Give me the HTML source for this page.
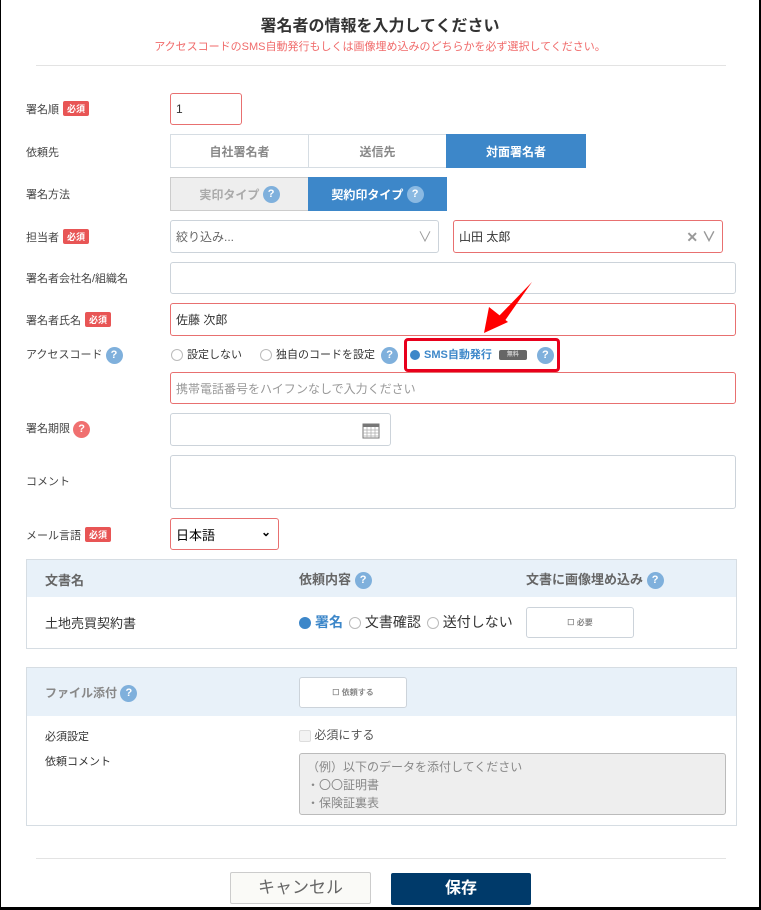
<!DOCTYPE html>
<html><head><meta charset="utf-8"><style>
*{box-sizing:border-box;margin:0;padding:0}
body{width:761px;height:910px;background:#000;font-family:"Liberation Sans","Noto Sans CJK JP",sans-serif;position:relative;overflow:hidden;color:#333}
#p{position:absolute;left:1px;top:0;width:758px;height:907px;background:#fff}
.a{position:absolute}
.lbl{position:absolute;left:25px;font-size:11px;color:#444}
.req{display:inline-block;background:#e85555;color:#fff;font-size:9px;font-weight:bold;padding:1px 4px;border-radius:2px;margin-left:4px;vertical-align:1px}
.in{position:absolute;border:1px solid #ccd3da;border-radius:3px;background:#fff;font-size:12px;padding-left:5px;display:flex;align-items:center}
.red{border-color:#e87070}
.q{display:inline-block;width:17px;height:17px;border-radius:50%;background:#7fb0dc;color:#fff;font-size:11px;font-weight:bold;text-align:center;line-height:17px;vertical-align:middle}
.tb{position:absolute;display:flex;align-items:center;justify-content:center;font-size:12px;font-weight:bold;border:1px solid #d6dde3}
.rd{display:inline-block;width:12px;height:12px;border:1px solid #bbb;border-radius:50%;vertical-align:middle;margin-right:4px}
.rd.on{background:#3d87c9;border-color:#3d87c9}
</style></head><body><div id="p">
<div class="a" style="left:0;width:758px;top:12px;text-align:center;font-size:16px;font-weight:bold;color:#333">署名者の情報を入力してください</div>
<div class="a" style="left:0;width:758px;top:38px;text-align:center;font-size:11px;color:#f06a6a">アクセスコードのSMS自動発行もしくは画像埋め込みのどちらかを必ず選択してください。</div>
<div class="a" style="left:35px;top:65px;width:690px;height:1px;background:#e3e3e3"></div>

<div class="lbl" style="top:101px">署名順<span class="req">必須</span></div>
<div class="in red" style="left:169px;top:93px;width:72px;height:32px">1</div>

<div class="lbl" style="top:144px">依頼先</div>
<div class="tb" style="left:169px;top:134px;width:139px;height:34px;color:#888">自社署名者</div>
<div class="tb" style="left:307px;top:134px;width:139px;height:34px;color:#888">送信先</div>
<div class="tb" style="left:445px;top:134px;width:140px;height:34px;background:#3d87c9;border-color:#3d87c9;color:#fff">対面署名者</div>

<div class="lbl" style="top:186px">署名方法</div>
<div class="tb" style="left:169px;top:177px;width:139px;height:34px;background:#eee;color:#aaa;border-color:#ccc">実印タイプ&nbsp;<span class="q">?</span></div>
<div class="tb" style="left:307px;top:177px;width:139px;height:34px;background:#3d87c9;border-color:#3d87c9;color:#fff">契約印タイプ&nbsp;<span class="q" style="background:#8ab9e2">?</span></div>

<div class="lbl" style="top:229px">担当者<span class="req">必須</span></div>
<div class="in" style="left:169px;top:220px;width:269px;height:33px;color:#666">絞り込み...<span class="a" style="right:6px;top:6px;color:#999;font-size:14px">&#8744;</span></div>
<div class="in red" style="left:452px;top:220px;width:270px;height:33px">山田 太郎<span class="a" style="right:6px;top:6px;color:#999;font-size:14px;font-weight:bold">✕ &#8744;</span></div>

<div class="lbl" style="top:270px">署名者会社名/組織名</div>
<div class="in" style="left:169px;top:262px;width:566px;height:32px"></div>

<div class="lbl" style="top:312px">署名者氏名<span class="req">必須</span></div>
<div class="in red" style="left:169px;top:303px;width:566px;height:33px">佐藤 次郎</div>

<div class="lbl" style="top:346px">アクセスコード <span class="q">?</span></div>
<div class="a" style="left:170px;top:346px;font-size:11px"><span class="rd"></span>設定しない</div>
<div class="a" style="left:259px;top:346px;font-size:11px"><span class="rd"></span>独自のコードを設定 <span class="q" style="margin-left:3px">?</span></div>
<div class="a" style="left:403px;top:338px;width:156px;height:34px;border:3px solid #e8001c;border-radius:4px"></div>
<div class="a" style="left:409px;top:346px;font-size:11px;font-weight:bold;color:#3d87c9"><span class="rd on" style="width:10px;height:10px"></span>SMS自動発行 <span style="display:inline-block;width:28px;height:10px;background:#666;border-radius:2px;vertical-align:middle;margin-left:4px;color:#ccc;font-size:6px;text-align:center;line-height:10px">無料</span><span class="q" style="margin-left:10px">?</span></div>
<svg class="a" style="left:475px;top:278px" width="65" height="60"><path d="M56 4 L22 39 L28 44 Z" fill="#f00"/><path d="M8 55 L13 29 L32 44 Z" fill="#f00"/></svg>
<div class="in red" style="left:169px;top:372px;width:566px;height:32px;color:#999">携帯電話番号をハイフンなしで入力ください</div>

<div class="lbl" style="top:420px">署名期限 <span class="q" style="background:#f07070">?</span></div>
<div class="in" style="left:169px;top:413px;width:221px;height:33px"><svg class="a" style="right:10px;top:8px" width="18" height="17"><rect x="1" y="2" width="16" height="14" fill="#fff" stroke="#777"/><rect x="1" y="2" width="16" height="3" fill="#777"/><path d="M1 8h16M1 11h16M1 14h16M5 5v11M9 5v11M13 5v11" stroke="#aaa" stroke-width=".7"/></svg></div>

<div class="lbl" style="top:473px">コメント</div>
<div class="in" style="left:169px;top:455px;width:566px;height:54px"></div>

<div class="lbl" style="top:527px">メール言語<span class="req">必須</span></div>
<div class="in red" style="left:169px;top:518px;width:109px;height:32px;color:#000;font-size:13px">日本語<span class="a" style="right:7px;top:6px;font-size:12px;font-weight:bold">&#8964;</span></div>

<div class="a" style="left:25px;top:559px;width:711px;height:90px;border:1px solid #d6dde3"></div>
<div class="a" style="left:26px;top:560px;width:709px;height:37px;background:#e8f1f9"></div>
<div class="a" style="left:44px;top:570px;font-size:13px;color:#666;font-weight:bold">文書名</div>
<div class="a" style="left:298px;top:569px;font-size:13px;color:#666;font-weight:bold">依頼内容 <span class="q">?</span></div>
<div class="a" style="left:525px;top:569px;font-size:13px;color:#666;font-weight:bold">文書に画像埋め込み <span class="q">?</span></div>
<div class="a" style="left:44px;top:613px;font-size:13px;color:#333">土地売買契約書</div>
<div class="a" style="left:298px;top:612px;font-size:14px;word-spacing:2px"><span class="rd on"></span><span style="color:#3d87c9;font-weight:bold">署名</span> <span class="rd"></span>文書確認 <span class="rd"></span>送付しない</div>
<div class="in" style="left:525px;top:607px;width:108px;height:31px;justify-content:center;padding:0;font-size:8px;color:#888;font-weight:bold">☐ 必要</div>

<div class="a" style="left:25px;top:667px;width:711px;height:159px;border:1px solid #d6dde3"></div>
<div class="a" style="left:26px;top:668px;width:709px;height:48px;background:#e8f1f9"></div>
<div class="a" style="left:44px;top:684px;font-size:12px;color:#888;font-weight:bold">ファイル添付 <span class="q">?</span></div>
<div class="in" style="left:298px;top:677px;width:108px;height:31px;justify-content:center;padding:0;font-size:8px;color:#888;font-weight:bold">☐ 依頼する</div>
<div class="a" style="left:44px;top:728px;font-size:11px">必須設定</div>
<div class="a" style="left:298px;top:726px;font-size:12px;color:#555"><span style="display:inline-block;width:12px;height:12px;border:1px solid #ddd;background:#f3f3f3;border-radius:2px;vertical-align:middle"></span> 必須にする</div>
<div class="a" style="left:44px;top:753px;font-size:11px">依頼コメント</div>
<div class="a" style="left:298px;top:753px;width:427px;height:62px;background:#eee;border:1px solid #bbb;border-radius:3px;font-size:12px;color:#888;padding:4px 0 0 7px;line-height:18px">（例）以下のデータを添付してください<br>・〇〇証明書<br>・保険証裏表</div>

<div class="a" style="left:35px;top:858px;width:690px;height:1px;background:#e3e3e3"></div>
<div class="a" style="left:229px;top:872px;width:141px;height:32px;border:1px solid #ccc;border-radius:2px;background:#fafaf7;font-size:17px;color:#666;text-align:center;line-height:30px">キャンセル</div>
<div class="a" style="left:390px;top:873px;width:140px;height:32px;background:#003a6a;border-radius:2px;font-size:16px;font-weight:bold;color:#fff;text-align:center;line-height:32px">保存</div>
</div></body></html>
